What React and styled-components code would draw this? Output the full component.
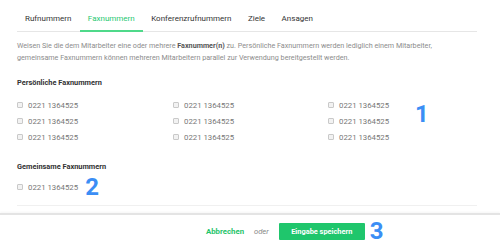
import React from 'react'
import styled, { createGlobalStyle } from 'styled-components'

const GlobalStyle = createGlobalStyle`
  html, body {
    margin: 0;
    padding: 0;
    background: #fff;
  }
  body {
    font-family: Roboto, "Liberation Sans", Arial, sans-serif;
    -webkit-font-smoothing: antialiased;
  }
`

const tabs = ['Rufnummern', 'Faxnummern', 'Konferenzrufnummern', 'Ziele', 'Ansagen']
const personal = Array(9).fill('0221 1364525')

export default function App() {
  const [active, setActive] = React.useState('Faxnummern')
  return (
    <Page>
      <GlobalStyle />
      <Content>
        <Tabs>
          {tabs.map((t) => (
            <Tab key={t} active={t === active} onClick={() => setActive(t)}>
              {t}
            </Tab>
          ))}
        </Tabs>
        <Description>
          Weisen Sie die dem Mitarbeiter eine oder mehrere <b>Faxnummer(n)</b> zu. Persönliche Faxnummern werden lediglich einem Mitarbeiter,
          <br />
          gemeinsame Faxnummern können mehreren Mitarbeitern parallel zur Verwendung bereitgestellt werden.
        </Description>

        <SectionTitle>Persönliche Faxnummern</SectionTitle>
        <Grid>
          {personal.map((n, i) => (
            <Item key={i}>
              <Check type="checkbox" />
              <span>{n}</span>
            </Item>
          ))}
          <Marker style={{ left: 398, top: 5 }}>1</Marker>
        </Grid>

        <SectionTitle second>Gemeinsame Faxnummern</SectionTitle>
        <SharedRow>
          <Item>
            <Check type="checkbox" />
            <span>0221 1364525</span>
          </Item>
          <InlineMarker>2</InlineMarker>
        </SharedRow>
      </Content>

      <Footer>
        <CancelLink>Abbrechen</CancelLink>
        <Or>oder</Or>
        <SaveButton>Eingabe speichern</SaveButton>
        <InlineMarker footer>3</InlineMarker>
      </Footer>
    </Page>
  )
}

const Page = styled.div`
  width: 500px;
  height: 247px;
  overflow: hidden;
  display: flex;
  flex-direction: column;
`

const Content = styled.div`
  margin: 0 23px 0 17px;
  padding-top: 8px;
  border-bottom: 1px solid #f0f0f0;
  height: 206px;
  box-sizing: border-box;
`

const Tabs = styled.div`
  display: flex;
  height: 23px;
  border-bottom: 1px solid #e6e6e6;
`

const Tab = styled.div`
  padding: 0 8.5px 0 8px;
  font-size: 8px;
  line-height: 21px;
  color: ${(p) => (p.active ? '#27c872' : '#333')};
  border-bottom: 2px solid ${(p) => (p.active ? '#4fd98a' : 'transparent')};
  margin-bottom: -1px;
  cursor: pointer;
`

const Description = styled.p`
  margin: 8px 0 0;
  font-size: 7.2px;
  line-height: 12px;
  color: #8c8c8c;
  white-space: nowrap;
  b {
    color: #555;
    font-weight: 700;
  }
`

const SectionTitle = styled.div`
  margin-top: ${(p) => (p.second ? '16px' : '13px')};
  font-size: 7.4px;
  font-weight: 700;
  color: #333;
  line-height: 12px;
`

const Grid = styled.div`
  position: relative;
  display: grid;
  grid-template-columns: 156px 155px 149px;
  grid-template-rows: repeat(3, 16px);
  grid-auto-flow: column;
  margin-top: 8px;
`

const Item = styled.label`
  display: flex;
  align-items: center;
  gap: 5px;
  font-size: 7.8px;
  color: #777;
  height: 16px;
`

const Check = styled.input`
  appearance: none;
  width: 6px;
  height: 6px;
  margin: 0;
  border: 1px solid #c9c9c9;
  border-radius: 1px;
  background: #f2f2f2;
`

const SharedRow = styled.div`
  display: flex;
  align-items: center;
  gap: 7px;
  margin-top: 6px;
`

const Marker = styled.span`
  position: absolute;
  font-size: 24px;
  font-weight: 700;
  color: #3b8ef5;
  line-height: 1;
`

const InlineMarker = styled.span`
  font-size: 24px;
  font-weight: 700;
  color: #3b8ef5;
  line-height: 16px;
  margin-left: ${(p) => (p.footer ? '5px' : '0')};
`

const Footer = styled.div`
  flex: 1;
  margin-top: 7px;
  border-top: 2px solid #e4e4e4;
  box-shadow: 0 -1px 2px rgba(0, 0, 0, 0.04);
  display: flex;
  align-items: center;
  padding-left: 206px;
`

const CancelLink = styled.a`
  font-size: 7.8px;
  font-weight: 700;
  color: #1fc46a;
  cursor: pointer;
`

const Or = styled.span`
  font-size: 7.6px;
  font-style: italic;
  color: #888;
  margin: 0 10px;
`

const SaveButton = styled.button`
  width: 86px;
  height: 17px;
  border: none;
  border-radius: 1px;
  background: #1fc66c;
  color: #fff;
  font-family: inherit;
  font-size: 7.4px;
  font-weight: 700;
  cursor: pointer;
`
